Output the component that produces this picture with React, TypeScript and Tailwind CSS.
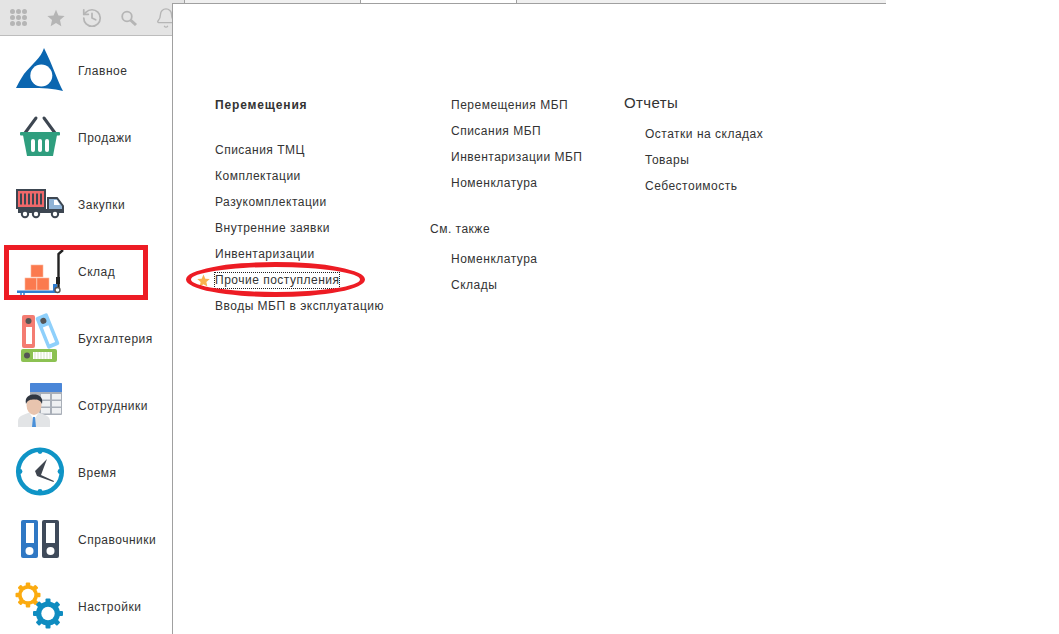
import React from "react";
import { History, Bell } from "lucide-react";

const dark = "#3d4651";

function Gear({ cx, cy, r, hole, teeth, tw, th, color }: { cx: number; cy: number; r: number; hole: number; teeth: number; tw: number; th: number; color: string }) {
  return (
    <g fill={color}>
      {Array.from({ length: teeth }).map((_, i) => (
        <rect key={i} x={cx - tw / 2} y={cy - r - th} width={tw} height={th + 2} rx={1} transform={`rotate(${(i * 360) / teeth} ${cx} ${cy})`} />
      ))}
      <circle cx={cx} cy={cy} r={r} />
      <circle cx={cx} cy={cy} r={hole} fill="#fff" />
    </g>
  );
}

function Icon({ y, children }: { y: number; children: React.ReactNode }) {
  return (
    <svg width={60} height={67} viewBox={`10 ${y} 60 67`} className="shrink-0">
      {children}
    </svg>
  );
}

const items: { label: string; icon: React.ReactNode }[] = [
  {
    label: "Главное",
    icon: (
      <Icon y={37}>
        <path d="M44 48 C41 58 32 64 24 74 C20 80 18 84 16 88 C28 88 50 87 63 91 C58 82 53 66 44 48 Z" fill="#0b66b0" />
        <circle cx={41.3} cy={75.5} r={11} fill="#fff" />
      </Icon>
    ),
  },
  {
    label: "Продажи",
    icon: (
      <Icon y={104}>
        <path d="M25 133 L36 118 M55 133 L44 118" stroke={dark} strokeWidth={3} strokeLinecap="round" />
        <rect x={20} y={132} width={40} height={3.5} rx={1} fill="#2f9e7e" />
        <path d="M23 135 H57 L53 156 H27 Z" fill="#2f9e7e" />
        <rect x={31} y={139} width={4} height={13} rx={2} fill="#fff" />
        <rect x={38} y={139} width={4} height={13} rx={2} fill="#fff" />
        <rect x={45} y={139} width={4} height={13} rx={2} fill="#fff" />
      </Icon>
    ),
  },
  {
    label: "Закупки",
    icon: (
      <Icon y={171}>
        <rect x={17} y={190} width={28} height={18} fill="#f0686a" stroke={dark} strokeWidth={2} />
        {[21, 25, 29, 33, 37, 41].map((x) => (
          <rect key={x} x={x - 1} y={193.5} width={2} height={11} fill={dark} />
        ))}
        <path d="M48 198 H57 L63 206 V212 H48 Z" fill="#8fb3d6" stroke={dark} strokeWidth={2} />
        <path d="M54 200 H57 L60 205 H54 Z" fill="#fff" />
        <rect x={18} y={209} width={45} height={4} fill={dark} />
        {[25, 36, 55].map((x) => (
          <circle key={x} cx={x} cy={214} r={3.2} fill="#fff" stroke={dark} strokeWidth={2} />
        ))}
      </Icon>
    ),
  },
  {
    label: "Склад",
    icon: (
      <Icon y={238}>
        <rect x={31} y={265} width={12} height={12} fill="#fb7a4f" stroke="#fbb79c" strokeWidth={0.6} />
        <rect x={25} y={278} width={11.5} height={12} fill="#fb7a4f" stroke="#fbb79c" strokeWidth={0.6} />
        <rect x={37} y={278} width={12} height={12} fill="#fb7a4f" stroke="#fbb79c" strokeWidth={0.6} />
        <rect x={17} y={290.5} width={40} height={2.5} fill="#2f7dd1" />
        <rect x={53} y={284} width={4} height={8} fill="#2f7dd1" />
        <circle cx={21} cy={294} r={1} fill="#2f7dd1" />
        <circle cx={24} cy={294} r={1} fill="#2f7dd1" />
        <path d="M58.5 289 V254 L63 250" stroke="#222" strokeWidth={2.4} fill="none" />
        <rect x={56} y={277} width={4} height={7} fill="#222" />
        <circle cx={57.5} cy={290} r={2.5} fill="#fff" stroke="#555" strokeWidth={1.4} />
      </Icon>
    ),
  },
  {
    label: "Бухгалтерия",
    icon: (
      <Icon y={305}>
        <rect x={22} y={315} width={13} height={33} rx={2} fill="#f47c72" />
        <circle cx={28.5} cy={321} r={3} fill="#555" />
        <rect x={26} y={327} width={6} height={17} fill="#fff" />
        <g transform="rotate(-22 47.5 331)">
          <rect x={41} y={314} width={13} height={34} rx={2} fill="#8fd0fb" />
          <circle cx={47.5} cy={320} r={3} fill="#555" />
          <rect x={44.5} y={326} width={6} height={18} fill="#fff" />
        </g>
        <rect x={21} y={349} width={36} height={13} rx={2} fill="#8cc152" />
        <circle cx={27} cy={355.5} r={3} fill="#555" />
        <rect x={33} y={352} width={19} height={7} fill="#fff" />
        <path d="M35 352 V359 M38 352 V359 M41 352 V359 M44 352 V359 M47 352 V359 M50 352 V359" stroke="#c9d8b5" strokeWidth={0.7} />
      </Icon>
    ),
  },
  {
    label: "Сотрудники",
    icon: (
      <Icon y={372}>
        <rect x={30} y={383} width={32} height={32} rx={1} fill="#a9afb8" />
        <path d="M30 392 V384 a1 1 0 0 1 1-1 H61 a1 1 0 0 1 1 1 V392 Z" fill="#4a86d8" />
        {[0, 1, 2].map((r) =>
          [41, 52].map((x) => <rect key={`${r}-${x}`} x={x} y={394 + r * 7} width={9} height={5.5} fill="#eef0f2" />)
        )}
        <path d="M18 427 V421 C18 415 26 414 34 411 C42 414 50 415 50 421 V427 Z" fill="#e2e4e6" />
        <path d="M29 412 L34 420 L39 412 Z" fill="#fff" />
        <path d="M33 417 H35 L36 427 H32 Z" fill="#4a90d9" />
        <ellipse cx={34} cy={405} rx={7.5} ry={10} fill="#e8c4ae" />
        <path d="M26 404 C24.500 397 29 394.500 34 394.500 C39 394.500 43.500 397 42 404 C40.500 400 37 399.500 34 399.500 C31 399.500 27.500 400 26 404 Z" fill="#2f3640" />
      </Icon>
    ),
  },
  {
    label: "Время",
    icon: (
      <Icon y={439}>
        <circle cx={40} cy={471.5} r={21.8} fill="#fff" stroke="#0f94c6" strokeWidth={4.5} />
        {[[40, 451.5], [40, 491.5], [20, 471.5], [60, 471.5]].map(([x, y]) => (
          <circle key={`${x}${y}`} cx={x} cy={y} r={2.4} fill="#0f94c6" />
        ))}
        <path d="M47 459 L41 475 L54 481 L53.500 482 L37 476 L35 471 Z" fill="#3f4650" />
      </Icon>
    ),
  },
  {
    label: "Справочники",
    icon: (
      <Icon y={506}>
        <rect x={21} y={520} width={17} height={38} rx={2} fill="#2f78c4" />
        <rect x={26} y={523} width={8} height={20} fill="#fff" />
        <circle cx={29.500} cy={551} r={4} fill="#fff" />
        <rect x={42} y={520} width={17} height={38} rx={2} fill="#3f4a5a" />
        <rect x={46} y={523} width={9} height={20} fill="#fff" />
        <circle cx={50.500} cy={551} r={4} fill="#fff" />
      </Icon>
    ),
  },
  {
    label: "Настройки",
    icon: (
      <Icon y={573}>
        <Gear cx={28} cy={595} r={10} hole={6.300} teeth={8} tw={4.500} th={2.500} color="#fbab10" />
        <Gear cx={48} cy={613.500} r={12} hole={6.700} teeth={8} tw={5} th={3} color="#0f8cc0" />
      </Icon>
    ),
  },
];

function Row({ children, className = "" }: { children: React.ReactNode; className?: string }) {
  return <div className={`flex h-[26px] items-center whitespace-nowrap ${className}`}>{children}</div>;
}

export default function App() {
  return (
    <div className="relative flex h-[634px] w-[1059px] overflow-hidden bg-white font-['Liberation_Sans',sans-serif] text-[12px] tracking-[0.5px] text-[#333]">
      <aside className="flex w-[172px] shrink-0 flex-col overflow-hidden">
        <header className="flex h-[36px] shrink-0 items-center border-b border-[#bdbdbd] bg-[#e4e4e4] pl-[10px] text-[#b5b5b5]">
          <div className="grid h-[17px] w-[17px] shrink-0 grid-cols-3 gap-[1.5px]">
            {Array.from({ length: 9 }).map((_, i) => (
              <span key={i} className="rounded-full bg-[#b5b5b5]" />
            ))}
          </div>
          <svg width={18} height={18} viewBox="0 0 24 24" className="ml-[20px] shrink-0">
            <path d="M12 1 L15.300 8.600 L23.500 9.300 L17.300 14.800 L19.100 23 L12 18.700 L4.900 23 L6.700 14.800 L0.500 9.300 L8.700 8.600 Z" fill="#b5b5b5" />
          </svg>
          <History size={22} strokeWidth={1.9} className="ml-[16px] shrink-0" />
          <svg width={16} height={16} viewBox="121 8 16 16" className="ml-[18px] shrink-0">
            <circle cx={127} cy={14.500} r={4.800} fill="none" stroke="#b5b5b5" strokeWidth={1.8} />
            <path d="M130.500 18 L136 23" stroke="#b5b5b5" strokeWidth={3} />
          </svg>
          <Bell size={22} strokeWidth={1.5} className="ml-[18px] shrink-0" />
        </header>
        <nav className="mt-px flex flex-col">
          {items.map((it) => (
            <div key={it.label} className="flex h-[67px] shrink-0 items-center pl-[10px]">
              {it.icon}
              <span className="ml-[8px]">{it.label}</span>
            </div>
          ))}
        </nav>
      </aside>

      <main className="flex w-[714px] flex-col">
        <div className="flex h-[3px] shrink-0 bg-[#f0f0f0]">
          <div className="w-[12px] bg-[#e4e4e4]" />
          <div className="w-[176px] border-l border-[#a0a0a0]" />
          <div className="w-[157px] border-l border-r border-[#a0a0a0] bg-white" />
        </div>
        <div className="flex flex-1 border-l border-t border-[#a0a0a0] pl-[42px] pt-[88px]">
          <section className="w-[215px]">
            <Row className="mb-[19px] font-bold tracking-[0.85px]">Перемещения</Row>
            <Row>Списания ТМЦ</Row>
            <Row>Комплектации</Row>
            <Row>Разукомплектации</Row>
            <Row>Внутренние заявки</Row>
            <Row>Инвентаризации</Row>
            <Row className="relative">
              <svg width={13} height={13} viewBox="0 0 24 24" className="absolute left-[-18px] top-[7px]">
                <path d="M12 1 L15.300 8.600 L23.500 9.300 L17.300 14.800 L19.100 23 L12 18.700 L4.900 23 L6.700 14.800 L0.500 9.300 L8.700 8.600 Z" fill="#f9b24e" />
              </svg>
              <span className="outline outline-1 outline-dotted outline-[#222] leading-[15px]">Прочие поступления</span>
            </Row>
            <Row>Вводы МБП в эксплуатацию</Row>
          </section>
          <section className="w-[194px]">
            <div className="pl-[21px]">
              <Row>Перемещения МБП</Row>
              <Row>Списания МБП</Row>
              <Row>Инвентаризации МБП</Row>
              <Row>Номенклатура</Row>
            </div>
            <Row className="mb-[4px] mt-[20px]">См. также</Row>
            <div className="pl-[21px]">
              <Row>Номенклатура</Row>
              <Row>Склады</Row>
            </div>
          </section>
          <section className="-mt-[2px]">
            <Row className="mb-[5px] text-[15px] tracking-[0.4px]">Отчеты</Row>
            <div className="pl-[21px]">
              <Row>Остатки на складах</Row>
              <Row>Товары</Row>
              <Row>Себестоимость</Row>
            </div>
          </section>
        </div>
      </main>

      <div className="absolute left-[4px] top-[245px] h-[55px] w-[144px] border-[5px] border-[#ed1c24]" />
      <div className="absolute left-[186px] top-[262px] h-[35px] w-[179px] rounded-[50%] border-[5px] border-[#ed1c24]" />
    </div>
  );
}
